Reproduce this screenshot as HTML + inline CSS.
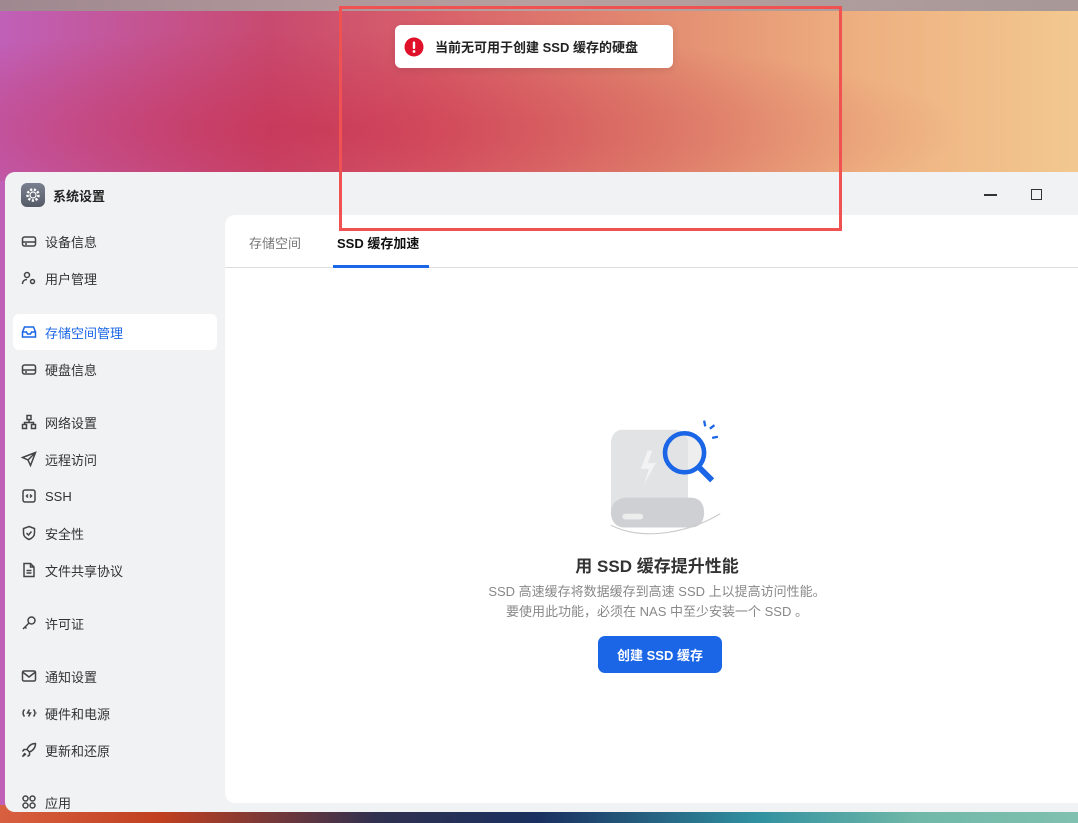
<!DOCTYPE html>
<html><head><meta charset="utf-8"><style>
*{margin:0;padding:0;box-sizing:border-box}
body{width:1078px;height:823px;overflow:hidden;position:relative;font-family:"Liberation Sans","Noto Sans CJK SC",sans-serif;
background:linear-gradient(90deg,#c060b8 0%,#c84a70 25%,#d8606a 40%,#e28a70 60%,#eeb080 80%,#f2c890 100%);}
.topband{position:absolute;left:0;top:0;width:1078px;height:11px;background:linear-gradient(90deg,#a08890,#b8a0a0,#a89898);}
.glow{position:absolute;left:0;top:11px;width:1078px;height:170px;background:radial-gradient(ellipse at 30% 70%,rgba(200,40,70,.5),rgba(0,0,0,0) 60%);}
.bottom{position:absolute;left:0;top:805px;width:1078px;height:18px;background:linear-gradient(90deg,#d86040 0%,#c04020 15%,#303050 35%,#1a3060 50%,#3090a0 70%,#70b8a8 85%,#80c0b0 100%);}
.win{position:absolute;left:5px;top:172px;width:1090px;height:640px;background:#f1f2f4;border-radius:10px;}
.title{position:absolute;left:16px;top:11px;display:flex;align-items:center;font-size:13px;color:#222;font-weight:bold}
.appicon{width:24px;height:24px;border-radius:6px;background:linear-gradient(#7a8090,#555b66);margin-right:8px;display:flex;align-items:center;justify-content:center}
.ctl{position:absolute;top:24px}
.nav{position:absolute;left:8px;top:0;width:204px}
.item{position:absolute;left:0;width:204px;height:36px;display:flex;align-items:center;padding-left:8px;font-size:13px;color:#333;border-radius:6px}
.item svg{width:16px;height:16px;margin-right:8px;stroke:#444;fill:none;stroke-width:1.5}
.item.act{background:#fff;color:#1a66e6}
.item.act svg{stroke:#1a66e6}
.panel{position:absolute;left:220px;top:43px;width:870px;height:588px;background:#fff;border-radius:10px 0 0 10px}
.tabs{position:absolute;left:0;top:0;width:100%;height:53px;border-bottom:1px solid #ddd}
.tab{position:absolute;top:18px;font-size:13px;color:#777}
.tab.a{color:#111;font-weight:bold}
.ul{position:absolute;left:108px;top:50px;width:96px;height:3px;background:#1a66e6}
.toast{position:absolute;left:395px;top:25px;width:278px;height:43px;background:#fff;border-radius:6px;display:flex;align-items:center;padding-left:9px;font-size:13px;color:#222;font-weight:bold;box-shadow:0 2px 8px rgba(0,0,0,.1)}
.red{position:absolute;left:339px;top:6px;width:503px;height:225px;border:3px solid #f05252;}
</style></head><body>
<div class="topband"></div><div class="glow"></div><div class="bottom"></div>
<div class="win">
 <div class="title"><div class="appicon"><svg width="16" height="16" viewBox="0 0 16 16"><circle cx="8" cy="8" r="5.5" fill="none" stroke="#fff" stroke-width="2.5" stroke-dasharray="2.2 1.6"/><circle cx="8" cy="8" r="3" fill="none" stroke="#fff" stroke-width="1.2"/></svg></div>系统设置</div>
 <div class="ctl" style="left:979px;width:13px;height:2px;background:#333;top:22px"></div>
 <div class="ctl" style="left:1026px;top:17px;width:11px;height:11px;border:1.6px solid #333"></div>
 <div class="nav">
  <div class="item" style="top:51px"><svg viewBox="0 0 16 16"><rect x="1.5" y="4" width="13" height="9" rx="2"/><path d="M1.5 9h13M4 11h2"/></svg>设备信息</div>
  <div class="item" style="top:88px"><svg viewBox="0 0 16 16"><circle cx="6" cy="5" r="2.5"/><path d="M1.5 14c0-3 2-4.5 4.5-4.5"/><circle cx="11.5" cy="11.5" r="2"/></svg>用户管理</div>
  <div class="item act" style="top:142px"><svg viewBox="0 0 16 16"><path d="M1.5 8l2-5h9l2 5v5h-13z M1.5 8h4l1 2h3l1-2h4"/></svg>存储空间管理</div>
  <div class="item" style="top:179px"><svg viewBox="0 0 16 16"><rect x="1.5" y="4" width="13" height="9" rx="2"/><path d="M1.5 9h13M4 11h2"/></svg>硬盘信息</div>
  <div class="item" style="top:232px"><svg viewBox="0 0 16 16"><rect x="6" y="1.5" width="4" height="4"/><rect x="1.5" y="10.5" width="4" height="4"/><rect x="10.5" y="10.5" width="4" height="4"/><path d="M8 5.5v3M3.5 10.5v-2h9v2"/></svg>网络设置</div>
  <div class="item" style="top:269px"><svg viewBox="0 0 16 16"><path d="M14.5 1.5L1.5 6.5l5.5 2.5 2.5 5.5z M7 9l7.5-7.5"/></svg>远程访问</div>
  <div class="item" style="top:306px"><svg viewBox="0 0 16 16"><rect x="2" y="2" width="12" height="12" rx="2"/><path d="M7 6.5L5.5 8 7 9.5M9 6.5l1.5 1.5L9 9.5"/></svg>SSH</div>
  <div class="item" style="top:343px"><svg viewBox="0 0 16 16"><path d="M8 1.5l5.5 2v4.5c0 3.5-3 5.5-5.5 6.5C5.5 13.5 2.5 11.5 2.5 8V3.5z M5.5 8l2 2 3-3.5"/></svg>安全性</div>
  <div class="item" style="top:380px"><svg viewBox="0 0 16 16"><path d="M3 1.5h6.5l3.5 3.5v9.5h-10z M9.5 1.5v3.5h3.5 M5.5 8.5h5M5.5 11h5"/></svg>文件共享协议</div>
  <div class="item" style="top:433px"><svg viewBox="0 0 16 16"><circle cx="10.5" cy="5.5" r="3.5"/><path d="M8 8L2 14M4 12l1.5 1.5"/></svg>许可证</div>
  <div class="item" style="top:486px"><svg viewBox="0 0 16 16"><rect x="1.5" y="3" width="13" height="10" rx="1.5"/><path d="M1.5 4l6.5 5 6.5-5"/></svg>通知设置</div>
  <div class="item" style="top:523px"><svg viewBox="0 0 16 16"><path d="M3.5 4.5a5 5 0 000 7M12.5 4.5a5 5 0 010 7M8.5 4.5L6.5 8h3l-2 3.5M15 8h.5"/></svg>硬件和电源</div>
  <div class="item" style="top:560px"><svg viewBox="0 0 16 16"><path d="M14.5 1.5c-4 0-7 2.5-8.5 6l2.5 2.5c3.5-1.5 6-4.5 6-8.5z M6 7.5H3l-1.5 2 M8.5 10v3l-2 1.5 M4 11l-2.5 3.5L5 12"/></svg>更新和还原</div>
  <div class="item" style="top:612px"><svg viewBox="0 0 16 16"><circle cx="4.5" cy="4.5" r="2.5"/><circle cx="11.5" cy="4.5" r="2.5"/><circle cx="4.5" cy="11.5" r="2.5"/><circle cx="11.5" cy="11.5" r="2.5"/></svg>应用</div>
 </div>
 <div class="panel">
  <div class="tabs"><div class="tab" style="left:24px">存储空间</div><div class="tab a" style="left:112px">SSD 缓存加速</div><div class="ul"></div></div>
  <svg style="position:absolute;left:365px;top:201px" width="150" height="138" viewBox="0 0 130 120">
   <path d="M28 12h45c8 0 12 5 12 12v60H18V24c0-7 4-12 10-12z" fill="#e2e3e5"/>
   <path d="M18 84c0-8 6-13 14-13h55c8 0 12 5 12 13v0c0 8-4 13-12 13H30c-7 0-12-5-12-13z" fill="#cfd0d3"/>
   <rect x="28" y="85" width="18" height="5" rx="2.5" fill="#eceded"/>
   <path d="M50 30l-6 16h7l-4 13 10-18h-7l4-11z" fill="#f3f3f4"/>
   <path d="M18 95c30 15 70 5 95-10" stroke="#ccc" fill="none" stroke-width="1"/>
   <circle cx="82" cy="32" r="17" fill="rgba(226,227,229,.6)" stroke="#1a66e6" stroke-width="4"/>
   <path d="M94 44l12 12" stroke="#1a66e6" stroke-width="5"/>
   <path d="M99 4l1 5M104 11l4-3M106 19l5-1" stroke="#1a66e6" stroke-width="2"/>
  </svg>
  <div style="position:absolute;left:0;width:870px;top:337px;text-align:center;font-size:17px;font-weight:bold;color:#333;padding-right:6px">用 SSD 缓存提升性能</div>
  <div style="position:absolute;left:0;width:870px;top:367px;text-align:center;font-size:13px;color:#888;line-height:20px;padding-right:6px">SSD 高速缓存将数据缓存到高速 SSD 上以提高访问性能。<br>要使用此功能，必须在 NAS 中至少安装一个 SSD 。</div>
  <div style="position:absolute;left:373px;top:421px;width:124px;height:37px;background:#1a66e6;border-radius:7px;color:#fff;font-size:13px;font-weight:bold;display:flex;align-items:center;justify-content:center">创建 SSD 缓存</div>
 </div>
</div>
<div class="toast"><svg width="20" height="20" viewBox="0 0 20 20" style="margin-right:11px"><circle cx="10" cy="10" r="9.5" fill="#e0102a"/><rect x="8.8" y="4.5" width="2.4" height="7.5" rx="1" fill="#fff"/><circle cx="10" cy="14.5" r="1.4" fill="#fff"/></svg>当前无可用于创建 SSD 缓存的硬盘</div>
<div class="red"></div>
</body></html>
